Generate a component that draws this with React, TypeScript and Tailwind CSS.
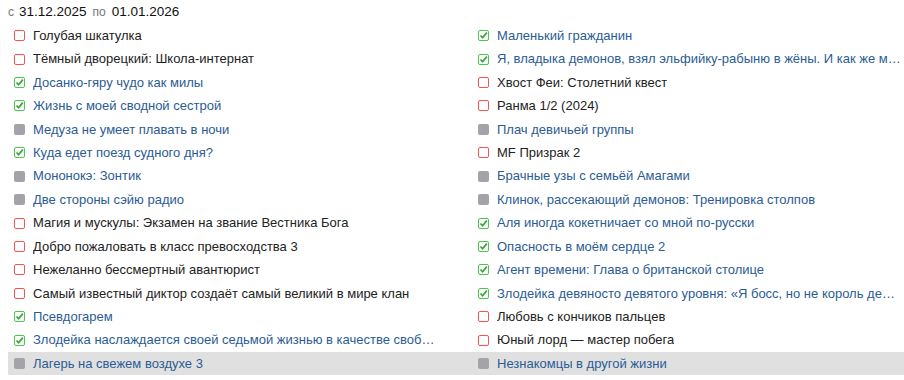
import React from "react";

type Status = "plan" | "done" | "drop";

interface Item {
  title: string;
  status: Status;
}

const left: Item[] = [
  { title: "Голубая шкатулка", status: "plan" },
  { title: "Тёмный дворецкий: Школа-интернат", status: "plan" },
  { title: "Досанко-гяру чудо как милы", status: "done" },
  { title: "Жизнь с моей сводной сестрой", status: "done" },
  { title: "Медуза не умеет плавать в ночи", status: "drop" },
  { title: "Куда едет поезд судного дня?", status: "done" },
  { title: "Мононокэ: Зонтик", status: "drop" },
  { title: "Две стороны сэйю радио", status: "drop" },
  { title: "Магия и мускулы: Экзамен на звание Вестника Бога", status: "plan" },
  { title: "Добро пожаловать в класс превосходства 3", status: "plan" },
  { title: "Нежеланно бессмертный авантюрист", status: "plan" },
  { title: "Самый известный диктор создаёт самый великий в мире клан", status: "plan" },
  { title: "Псевдогарем", status: "done" },
  {
    title: "Злодейка наслаждается своей седьмой жизнью в качестве свободной невесты во вражеской стране",
    status: "done",
  },
  { title: "Лагерь на свежем воздухе 3", status: "drop" },
];

const right: Item[] = [
  { title: "Маленький гражданин", status: "done" },
  {
    title: "Я, владыка демонов, взял эльфийку-рабыню в жёны. И как же мне теперь её любить?",
    status: "done",
  },
  { title: "Хвост Феи: Столетний квест", status: "plan" },
  { title: "Ранма 1/2 (2024)", status: "plan" },
  { title: "Плач девичьей группы", status: "drop" },
  { title: "MF Призрак 2", status: "plan" },
  { title: "Брачные узы с семьёй Амагами", status: "drop" },
  { title: "Клинок, рассекающий демонов: Тренировка столпов", status: "drop" },
  { title: "Аля иногда кокетничает со мной по-русски", status: "done" },
  { title: "Опасность в моём сердце 2", status: "done" },
  { title: "Агент времени: Глава о британской столице", status: "done" },
  {
    title: "Злодейка девяносто девятого уровня: «Я босс, но не король демонов»",
    status: "done",
  },
  { title: "Любовь с кончиков пальцев", status: "plan" },
  { title: "Юный лорд — мастер побега", status: "plan" },
  { title: "Незнакомцы в другой жизни", status: "drop" },
];

const Box: React.FC<{ status: Status }> = ({ status }) => {
  if (status === "drop") {
    return <span className="h-[11px] w-[11px] shrink-0 rounded-[2px] bg-[#a2a4aa]" />;
  }
  if (status === "done") {
    return (
      <span className="relative h-[11px] w-[11px] shrink-0 rounded-[2px] border border-[#4cc64c]">
        <svg viewBox="0 0 11 11" className="absolute -left-px -top-px h-[11px] w-[11px]">
          <path d="M2.5 5.5 L4.6 7.8 L8.8 2.6" fill="none" stroke="#33a833" strokeWidth="1.7" />
        </svg>
      </span>
    );
  }
  return <span className="h-[11px] w-[11px] shrink-0 rounded-[2px] border border-[#f2574f]" />;
};

const Cell: React.FC<{ item: Item; pad: string }> = ({ item, pad }) => (
  <div className={`flex min-w-0 items-center gap-2 pl-[6px] ${pad}`}>
    <Box status={item.status} />
    <span
      className={
        item.status === "plan"
          ? "truncate text-[#222222]"
          : "truncate text-[#2b5c94]"
      }
    >
      {item.title}
    </span>
  </div>
);

export default function App() {
  return (
    <div className="h-[380px] w-[904px] overflow-hidden bg-white font-['Liberation_Sans',Arial,sans-serif] text-[13px]">
      <div className="flex h-[24px] items-center pl-2">
        <span className="text-[12px] text-[#777777]">с</span>
        <span className="ml-[5px] text-[13.5px] text-[#111111]">31.12.2025</span>
        <span className="ml-[6px] text-[12px] text-[#777777]">по</span>
        <span className="ml-[6px] text-[13.5px] text-[#111111]">01.01.2026</span>
      </div>
      <div className="ml-2">
        {left.map((item, i) => (
          <div
            key={item.title}
            className={
              i === left.length - 1
                ? "grid h-[23.43px] grid-cols-[464px_1fr] bg-[#e0e0e0]"
                : "grid h-[23.43px] grid-cols-[464px_1fr]"
            }
          >
            <Cell item={item} pad="pr-[34px]" />
            <Cell item={right[i]} pad="pr-[1px]" />
          </div>
        ))}
      </div>
    </div>
  );
}
